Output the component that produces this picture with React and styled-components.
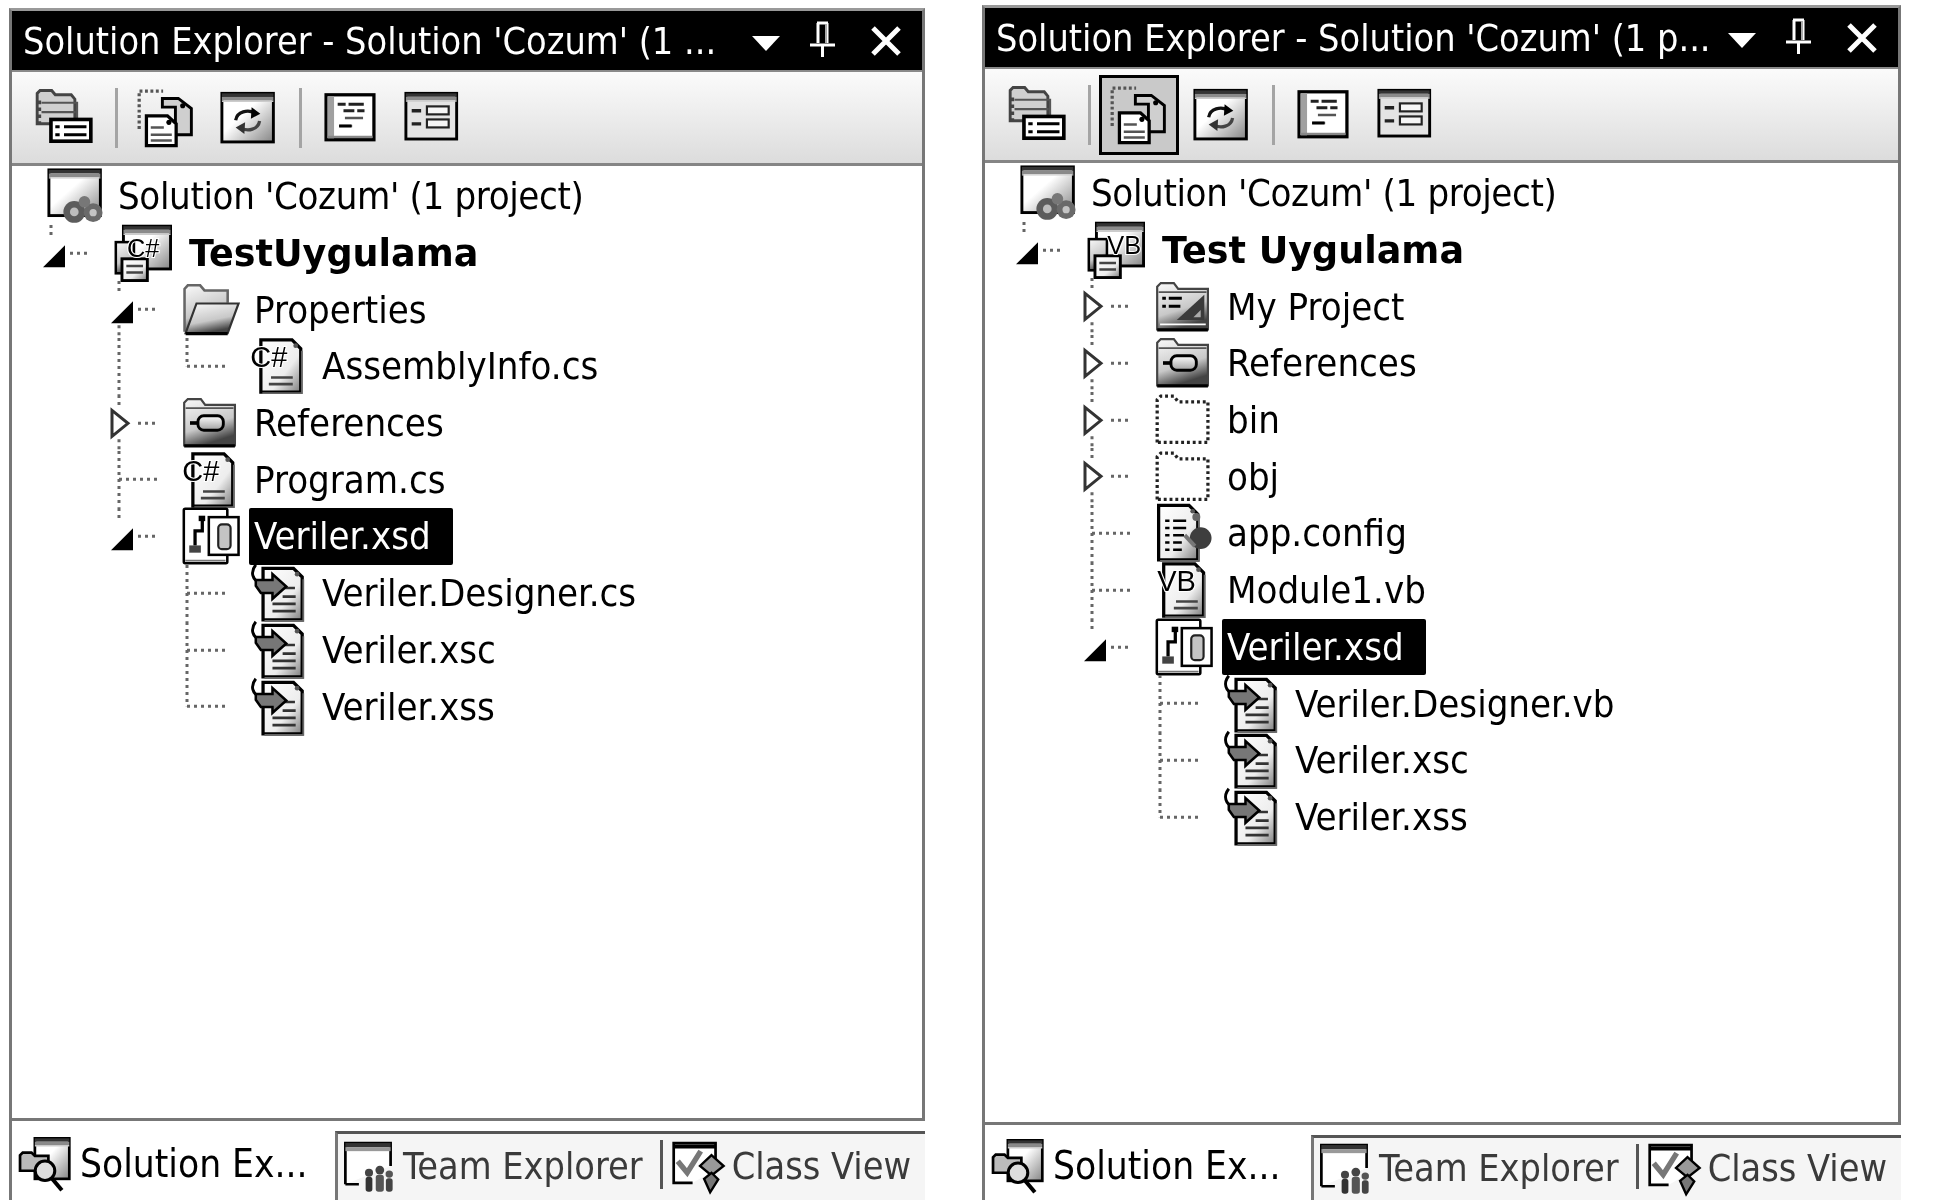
import { createGlobalStyle } from "styled-components";
import styled from "styled-components";

const GlobalStyle = createGlobalStyle`
  html, body {
    margin: 0;
    padding: 0;
    background: #ffffff;
  }
`;

const ROW_HEIGHT = 56.7;
const FONT = `"DejaVu Sans Condensed", "Liberation Sans", sans-serif`;

/* ---------- shared svg bits ---------- */

const Shades = () => (
  <defs>
    <linearGradient id="page" x1="0" y1="0" x2="1" y2="1">
      <stop offset="0" stopColor="#ffffff" />
      <stop offset="0.62" stopColor="#ededed" />
      <stop offset="1" stopColor="#7c7c7c" />
    </linearGradient>
    <linearGradient id="dark" x1="0" y1="0" x2="0.35" y2="1">
      <stop offset="0" stopColor="#fafafa" />
      <stop offset="0.65" stopColor="#c8c8c8" />
      <stop offset="1" stopColor="#444444" />
    </linearGradient>
    <linearGradient id="win" x1="0" y1="0" x2="1" y2="1">
      <stop offset="0.42" stopColor="#ffffff" />
      <stop offset="1" stopColor="#858585" />
    </linearGradient>
    <linearGradient id="pill" x1="0" y1="0" x2="0" y2="1">
      <stop offset="0" stopColor="#ffffff" />
      <stop offset="1" stopColor="#a0a0a0" />
    </linearGradient>
  </defs>
);

const IconSvg = styled.svg`
  display: block;
  flex: none;
  width: ${(p) => p.$size || 58}px;
  height: ${(p) => p.$size || 58}px;
  overflow: visible;
`;

const Glyph = ({ size, children }) => (
  <IconSvg $size={size} viewBox="0 0 16 16">
    <Shades />
    {children}
  </IconSvg>
);

const ln = { fill: "none", stroke: "#000", strokeWidth: 0.8 };
const tiny = {
  fontFamily: "'Liberation Sans', sans-serif",
  fontWeight: 400,
  stroke: "#fff",
  strokeWidth: 0.6,
  paintOrder: "stroke",
};

const Page = ({ x = 4, y = 0.8, w = 10, h = 14.4 }) => (
  <>
    <path
      d={`M${x} ${y}H${x + w - 2.4}L${x + w} ${y + 2.4}V${y + h}H${x}Z`}
      fill="url(#page)"
      stroke="#000"
      strokeWidth="0.9"
    />
    <path d={`M${x + 0.4} ${y + h + 0.3}H${x + w + 0.3}V${y + 3}`} fill="none" stroke="#666" strokeWidth="0.5" />
    <circle cx={x + w - 1.4} cy={y + 1.6} r="0.65" fill="#555" />
  </>
);

const WindowBox = ({ x = 1, y = 1, w = 14, h = 13, bar = 2.2, fill = "url(#win)" }) => (
  <>
    <rect x={x} y={y} width={w} height={h} fill={fill} stroke="#000" strokeWidth="0.8" />
    <rect x={x} y={y} width={w} height={bar * 0.5} fill="#333" />
    <rect x={x} y={y + bar * 0.5} width={w} height={bar * 0.5} fill="#8a8a8a" />
    <path d={`M${x} ${y + bar + 0.2}H${x + w}`} stroke="#ccc" strokeWidth="0.4" />
  </>
);

/* ---------- tree icons ---------- */

const SolutionIcon = () => (
  <Glyph>
    <WindowBox x={0.8} y={0.8} w={14.2} h={12.6} bar={2} />
    <circle cx="7.8" cy="12.4" r="3" fill="#5c5c5c" />
    <circle cx="7.8" cy="12.4" r="1.2" fill="#bdbdbd" />
    <circle cx="13" cy="12.6" r="2.6" fill="#6a6a6a" />
    <circle cx="13" cy="12.6" r="1" fill="#c4c4c4" />
    <circle cx="10.6" cy="9.6" r="1.6" fill="#777" />
  </Glyph>
);

const ProjectIcon = ({ kind }) => (
  <Glyph>
    <WindowBox x={2.6} y={0.6} w={13} h={11.8} bar={2} />
    <rect x="0.5" y="5" width="5" height="8.6" fill="url(#dark)" stroke="#000" strokeWidth="0.7" />
    <rect x="2.2" y="9.6" width="7" height="6" fill="url(#page)" stroke="#000" strokeWidth="0.8" />
    <path d="M3.4 11.6H8M3.4 13.4H8" stroke="#444" strokeWidth="0.7" />
    <text x={kind === "VB" ? 5.6 : 3.6} y="9.2" fontSize="7" {...tiny}>
      {kind}
    </text>
  </Glyph>
);

const OpenFolderIcon = () => (
  <Glyph>
    <path d="M0.7 14V2.2L1.6 1.2H5L6.2 2.6H12.6V6" fill="url(#dark)" stroke="#666" strokeWidth="0.7" />
    <path d="M1 14.4L4 6.2H15.6L12.6 14.4Z" fill="url(#dark)" stroke="#333" strokeWidth="0.6" />
    <path d="M1 14.5H12.6" stroke="#000" strokeWidth="0.9" />
  </Glyph>
);

const FolderBase = ({ children }) => (
  <>
    <path d="M0.6 14.2V2.4L1.6 1.4H5.2L6.4 3H14.6V14.2Z" fill="url(#dark)" stroke="#444" strokeWidth="0.6" />
    <path d="M1 3.9H14.2" stroke="#555" strokeWidth="0.5" />
    <path d="M0.6 14.3H14.6" stroke="#000" strokeWidth="0.9" />
    {children}
  </>
);

const ReferencesIcon = () => (
  <Glyph>
    <FolderBase>
      <rect x="4.4" y="6" width="7" height="4" rx="1.6" fill="url(#pill)" stroke="#000" strokeWidth="0.8" />
      <path d="M2.2 8H4.4" stroke="#000" strokeWidth="1" />
    </FolderBase>
  </Glyph>
);

const MyProjectIcon = () => (
  <Glyph>
    <FolderBase>
      <path d="M2 5.6H3M3.8 5.6H7.4M2 7.8H3M3.8 7.8H7" stroke="#000" strokeWidth="0.8" />
      <path d="M6 11.6L13.6 4.6V11.6Z" fill="#3a3a3a" />
      <path d="M10.6 10.8L12.6 8.8V10.8Z" fill="#aaa" />
      <path d="M1.4 12.8H14" stroke="#fff" strokeWidth="0.5" />
    </FolderBase>
  </Glyph>
);

const DashedFolderIcon = () => (
  <Glyph>
    <path
      d="M0.6 14.2V2.4L1.6 1.4H5.2L6.4 3H14.6V14.2Z"
      fill="none"
      stroke="#222"
      strokeWidth="0.9"
      strokeDasharray="0.8 0.8"
    />
  </Glyph>
);

const ConfigIcon = () => (
  <Glyph>
    <Page x={1} y={0.4} w={10.8} h={15} />
    <path d="M2.8 4.6H4M5 4.6H8.6M2.8 6.6H4M5 6.6H8.6M2.8 8.6H4M5 8.6H8M2.8 10.6H4M5 10.6H7.4M2.8 12.6H4M5 12.6H7.4" stroke="#000" strokeWidth="0.7" />
    <circle cx="12.6" cy="9.4" r="3" fill="#3e3e3e" />
    <circle cx="11.4" cy="3.6" r="1.1" fill="#666" />
    <path d="M8.2 8.6l2.8 3" stroke="#777" strokeWidth="1.1" />
  </Glyph>
);

const CodeDocIcon = ({ kind }) => (
  <Glyph>
    <Page x={kind === "VB" ? 2.4 : 3} y={0.8} w={11} h={14.4} />
    <path d="M5.8 11.2H11.8M5.2 13H11.8" stroke="#444" strokeWidth="0.7" />
    <text x={kind === "VB" ? 0.6 : 0.1} y="8.2" fontSize="8" {...tiny}>
      {kind}
    </text>
  </Glyph>
);

const SchemaIcon = () => (
  <Glyph>
    <rect x="0.5" y="0.5" width="12" height="15" rx="0.4" fill="#fff" stroke="#000" strokeWidth="0.7" />
    <rect x="7.4" y="2.8" width="8.2" height="10.4" fill="#fff" stroke="#000" strokeWidth="0.7" />
    <rect x="10" y="4.8" width="3.4" height="6.8" rx="1" fill="#c4c4c4" stroke="#222" strokeWidth="0.6" />
    <path d="M5.6 3.4V6.6H3.6V10.6" stroke="#000" strokeWidth="0.9" fill="none" />
    <rect x="4.6" y="2.4" width="1.8" height="1.5" fill="#000" />
    <rect x="2" y="10.6" width="3.2" height="2" fill="#444" />
    <path d="M0.9 14.8H12" stroke="#777" strokeWidth="0.5" />
  </Glyph>
);

const GeneratedDocIcon = () => (
  <Glyph>
    <Page x={3.6} y={1.2} w={10.8} h={14.2} />
    <path d="M9.2 6.6H12.4M9 9H12.6M6.2 11H12.6M6.2 13H12.6" stroke="#333" strokeWidth="0.7" />
    <path d="M1.6 0.2C0 2.2 0.6 4.6 3 5.2" {...ln} />
    <path d="M1.6 4.4H6.2V2.8L10 6.2L6.2 9.6V8H3L1.6 6Z" fill="#777" stroke="#000" strokeWidth="0.7" />
  </Glyph>
);

/* ---------- toolbar icons ---------- */

const ShowPropsIcon = () => (
  <Glyph>
    <path d="M0.6 9.6V1.2L1.4 0.4H4.6L5.6 1.6H10L11 2.8V9.6Z" fill="#d0d0d0" stroke="#444" strokeWidth="0.8" />
    <path d="M1.8 3.8H11.6V9M1.8 6.4H11.2" stroke="#555" strokeWidth="0.6" fill="none" />
    <path d="M1.2 3.2V10" stroke="#444" strokeWidth="1" strokeDasharray="1 0.9" />
    <rect x="4.4" y="8.4" width="11" height="6" fill="#fff" stroke="#000" strokeWidth="1" />
    <path d="M5.6 10.4H6.8M8 10.4H14.2M5.6 12.6H6.8M8 12.6H14.2" stroke="#000" strokeWidth="0.8" />
  </Glyph>
);

const CopyDocsIcon = () => (
  <Glyph>
    <path d="M0.6 11V0.6H7.2" fill="none" stroke="#555" strokeWidth="0.9" strokeDasharray="0.8 0.7" />
    <path d="M7 5V2.6H11.4L15 5.4V12.6H10.6V5Z" fill="#cfcfcf" stroke="#000" strokeWidth="0.8" />
    <circle cx="12.6" cy="4.6" r="0.7" fill="#000" />
    <path d="M2.6 7.4H8.4L10.8 9.6V15.6H2.6Z" fill="#fff" stroke="#000" strokeWidth="0.9" />
    <circle cx="8.8" cy="9.2" r="0.7" fill="#000" />
    <path d="M3.8 10.6H7.4M3.8 12.6H9.6M3.8 14.2H9.6" stroke="#555" strokeWidth="0.7" />
  </Glyph>
);

const RefreshIcon = () => (
  <Glyph>
    <WindowBox x={0.8} y={1.2} w={14.2} h={13.4} bar={2} />
    <path d="M4.6 8.6C5 6.2 8 5.6 9.8 6.6" fill="none" stroke="#111" strokeWidth="0.9" />
    <path d="M9 5L11.4 6.8L8.8 8.2Z" fill="#000" />
    <path d="M11.2 8.8C10.8 11.2 8 11.8 6.2 10.8" fill="none" stroke="#444" strokeWidth="0.9" />
    <path d="M7 12.4L4.6 10.6L7.2 9.2Z" fill="#333" />
  </Glyph>
);

const ViewCodeIcon = () => (
  <Glyph>
    <rect x="1.4" y="1.6" width="13.2" height="12.4" fill="#fff" stroke="#000" strokeWidth="0.9" />
    <rect x="1.8" y="2" width="1.8" height="11.6" fill="#a0a0a0" />
    <path d="M1.8 13.2H14.2" stroke="#888" strokeWidth="0.6" />
    <path d="M4.6 4.2H6.8M7.6 4.2H11.8M6.2 6H9.2M10 6H12" stroke="#222" strokeWidth="0.8" />
    <path d="M6.6 8H11.6M5 10.2H8.6" stroke="#555" strokeWidth="0.7" />
    <path d="M5 10.2H8.4" stroke="#000" strokeWidth="0.8" />
  </Glyph>
);

const ViewDesignIcon = () => (
  <Glyph>
    <WindowBox x={0.8} y={1.2} w={14} h={12.6} bar={1.9} fill="#e4e4e4" />
    <path d="M2.4 6H5M2.4 9.6H5" stroke="#222" strokeWidth="0.9" />
    <rect x="6.6" y="4.8" width="6" height="2.2" fill="#f6f6f6" stroke="#222" strokeWidth="0.6" />
    <rect x="6.6" y="8.4" width="6" height="2.2" fill="#f6f6f6" stroke="#222" strokeWidth="0.6" />
  </Glyph>
);

/* ---------- tab icons ---------- */

const SolutionExplorerIcon = () => (
  <Glyph size={54}>
    <WindowBox x={5} y={0.4} w={10.2} h={12} bar={2} />
    <path d="M0.6 10V5.4L1.4 4.6H4L5 5.6H9V10Z" fill="#bbb" stroke="#000" strokeWidth="0.8" />
    <circle cx="8" cy="10" r="2.9" fill="#ddd" stroke="#000" strokeWidth="0.9" />
    <path d="M10 12.2L13 15.8" stroke="#000" strokeWidth="1.2" />
  </Glyph>
);

const TeamExplorerIcon = () => (
  <Glyph size={54}>
    <path d="M1 13.4V1.2H14.4V8M1 13.4H5" fill="#fff" stroke="#000" strokeWidth="0.8" />
    <rect x="1" y="1.2" width="13.4" height="1.2" fill="#333" />
    <rect x="1" y="2.4" width="13.4" height="1.2" fill="#999" />
    <circle cx="8" cy="10" r="1.2" fill="#444" />
    <rect x="7" y="11.2" width="2" height="4.4" rx="0.8" fill="#333" />
    <circle cx="11.2" cy="9.2" r="1.3" fill="#444" />
    <rect x="10" y="10.6" width="2.4" height="5" rx="0.8" fill="#555" />
    <circle cx="14" cy="10.4" r="1.1" fill="#555" />
    <rect x="13" y="11.6" width="2" height="4" rx="0.8" fill="#444" />
  </Glyph>
);

const ClassViewIcon = () => (
  <Glyph size={54}>
    <path d="M13.2 9V1.2H0.8V13H6.4" fill="#fff" stroke="#000" strokeWidth="0.8" />
    <path d="M0.8 2.2H13.2" stroke="#000" strokeWidth="1.2" />
    <path d="M2 6.6L4.8 10L8.8 3.6" fill="none" stroke="#777" strokeWidth="1.6" />
    <path d="M12 4.8L15.6 8L12 10.8L8.6 8Z" fill="#999" stroke="#000" strokeWidth="0.7" />
    <path d="M9.8 11.8L12 10L14 12L11.6 15.8Z" fill="#777" stroke="#000" strokeWidth="0.7" />
  </Glyph>
);

/* ---------- title bar buttons ---------- */

const DropArrow = () => (
  <svg width="28" height="15" viewBox="0 0 28 15">
    <path d="M0 0H28L14 15Z" fill="#fff" />
  </svg>
);

const PinIcon = () => (
  <svg width="27" height="36" viewBox="0 0 27 36">
    <path d="M8 2H19M9 2V22M18 2V22M1 24H26M13.5 24V36" stroke="#fff" strokeWidth="3" fill="none" />
    <path d="M17 3V22" stroke="#aaa" strokeWidth="2" />
  </svg>
);

const CloseIcon = () => (
  <svg width="32" height="30" viewBox="0 0 32 30">
    <path d="M3 2L29 28M29 2L3 28" stroke="#fff" strokeWidth="5" />
  </svg>
);

/* ---------- tree ---------- */

const guideX = (level) => 39 + 68 * level;

const GuideSvg = styled.svg`
  display: block;
  flex: none;
  height: 100%;
`;

const Dots = (props) => (
  <path fill="none" stroke="#666" strokeWidth="3" strokeDasharray="3 4" {...props} />
);

const Guides = ({ depth, expander, hasNext, through = [] }) => {
  const width = 34 + 68 * depth;
  const h = ROW_HEIGHT;
  const c = h / 2;
  const p = guideX(depth - 1);
  return (
    <GuideSvg width={width} height={h}>
      {through.map((lvl) => (
        <Dots key={lvl} d={`M${guideX(lvl)} 0V${h}`} />
      ))}
      {depth > 0 && !expander && (
        <>
          <Dots d={`M${p} 0V${hasNext ? h : c}`} />
          <Dots d={`M${p} ${c}H${p + 39}`} />
        </>
      )}
      {depth > 0 && expander && (
        <>
          <Dots d={`M${p} 0V${c - 15}`} />
          {hasNext && <Dots d={`M${p} ${c + 16}V${h}`} />}
          <Dots d={`M${p + 19} ${c}H${p + 39}`} />
        </>
      )}
      {expander === "open" && <path d={`M${p + 14} ${c - 8}V${c + 14}H${p - 8}Z`} fill="#000" />}
      {expander === "closed" && (
        <path
          d={`M${p - 7} ${c - 13}L${p + 9} ${c}L${p - 7} ${c + 13}Z`}
          fill="#fff"
          stroke="#333"
          strokeWidth="3"
        />
      )}
    </GuideSvg>
  );
};

const TreeList = styled.div`
  flex: 1;
  padding-top: 2px;
  background: #ffffff;
`;

const Row = styled.div`
  display: flex;
  align-items: center;
  height: ${ROW_HEIGHT}px;
`;

const Label = styled.div`
  display: flex;
  align-items: center;
  height: 100%;
  margin-left: 9px;
  padding: 0 ${(p) => (p.$selected ? 22 : 20)}px 0 ${(p) => (p.$bold ? 8 : 5)}px;
  font-family: ${(p) => (p.$bold ? `"DejaVu Sans", "Liberation Sans", sans-serif` : "inherit")};
  font-size: ${(p) => (p.$bold ? 36.5 : 38)}px;
  font-weight: ${(p) => (p.$bold ? 700 : 400)};
  letter-spacing: ${(p) => (p.$tight ? "-0.35px" : "normal")};
  white-space: nowrap;
  color: ${(p) => (p.$selected ? "#ffffff" : "#000000")};
  background: ${(p) => (p.$selected ? "#000000" : "transparent")};
  border-radius: 2px;
`;

const TreeRow = ({ row }) => (
  <Row>
    <Guides depth={row.depth} expander={row.expander} hasNext={row.hasNext} through={row.through} />
    {row.icon}
    <Label $bold={row.bold} $selected={row.selected} $tight={row.tight}>
      {row.label}
    </Label>
  </Row>
);

/* ---------- panel ---------- */

const Desk = styled.div`
  display: flex;
  gap: 57px;
  width: 1953px;
  height: 1200px;
  padding-left: 9px;
  box-sizing: border-box;
  overflow: hidden;
  background: #ffffff;
  font-family: ${FONT};
  filter: blur(0.7px);
`;

const Panel = styled.section`
  display: flex;
  flex-direction: column;
  flex: none;
  width: ${(p) => p.$width}px;
  height: ${(p) => 1200 - p.$top}px;
  margin-top: ${(p) => p.$top}px;
`;

const Frame = styled.div`
  display: flex;
  flex-direction: column;
  flex: none;
  height: ${(p) => p.$height}px;
  box-sizing: border-box;
  border: 3px solid #777777;
  border-top-color: #999999;
`;

const TitleBar = styled.header`
  display: flex;
  align-items: center;
  flex: none;
  height: 59px;
  padding: 0 20px 0 11px;
  background: #000000;
  color: #ffffff;
`;

const TitleText = styled.div`
  flex: 1;
  font-size: 37.5px;
  white-space: nowrap;
`;

const TitleButtons = styled.div`
  display: flex;
  align-items: center;
`;

const ArrowSlot = styled.div`
  display: flex;
  margin: 6px 29px 0 0;
`;

const PinSlot = styled.div`
  display: flex;
  margin: -4px 34px 0 0;
`;

const Toolbar = styled.div`
  display: flex;
  align-items: center;
  gap: 2px;
  flex: none;
  height: 91px;
  padding-left: 12px;
  border-top: 2px solid #8a8a8a;
  border-bottom: 3px solid #858585;
  background: linear-gradient(#fbfbfb, #efefef 40%, #dcdcdc 100%);
`;

const Tool = styled.button`
  display: flex;
  align-items: center;
  justify-content: center;
  box-sizing: border-box;
  width: 80px;
  height: 80px;
  padding: 0;
  background: ${(p) => (p.$active ? "#c9c9c9" : "transparent")};
  border: 3px solid ${(p) => (p.$active ? "#000000" : "transparent")};
`;

const ToolSep = styled.div`
  width: 3px;
  height: 60px;
  margin: 0 6px 0 9px;
  background: #a4a4a4;
`;

const TabStrip = styled.div`
  display: flex;
  flex: 1;
  border-left: 3px solid #777777;
`;

const ActiveTab = styled.div`
  display: flex;
  align-items: center;
  flex: none;
  box-sizing: border-box;
  width: ${(p) => p.$width}px;
  padding: 6px 0 0 6px;
  gap: 8px;
  font-size: 38.5px;
  white-space: nowrap;
  color: #000000;
`;

const IdleTabs = styled.div`
  display: flex;
  align-items: center;
  flex: 1;
  margin-top: 10px;
  padding: 0 0 3px 4px;
  border-top: 3px solid #555555;
  border-left: 3px solid #777777;
  background: #f5f5f5;
`;

const IdleTab = styled.div`
  display: flex;
  align-items: center;
  gap: 7px;
  font-size: 37.5px;
  white-space: nowrap;
  color: #3a3a3a;
`;

const TabSep = styled.div`
  align-self: stretch;
  width: 3px;
  margin: 6px 8px 8px 17px;
  background: #555555;
`;

const ExplorerPanel = ({ top, width, frameHeight, title, activeTabWidth, activeTool, rows }) => (
  <Panel $top={top} $width={width}>
    <Frame $height={frameHeight}>
      <TitleBar>
        <TitleText>{title}</TitleText>
        <TitleButtons>
          <ArrowSlot>
            <DropArrow />
          </ArrowSlot>
          <PinSlot>
            <PinIcon />
          </PinSlot>
          <CloseIcon />
        </TitleButtons>
      </TitleBar>
      <Toolbar>
        <Tool>
          <ShowPropsIcon />
        </Tool>
        <ToolSep />
        <Tool $active={activeTool}>
          <CopyDocsIcon />
        </Tool>
        <Tool>
          <RefreshIcon />
        </Tool>
        <ToolSep />
        <Tool>
          <ViewCodeIcon />
        </Tool>
        <Tool>
          <ViewDesignIcon />
        </Tool>
      </Toolbar>
      <TreeList>
        {rows.map((row) => (
          <TreeRow key={row.label} row={row} />
        ))}
      </TreeList>
    </Frame>
    <TabStrip>
      <ActiveTab $width={activeTabWidth}>
        <SolutionExplorerIcon />
        Solution Ex...
      </ActiveTab>
      <IdleTabs>
        <IdleTab>
          <TeamExplorerIcon />
          Team Explorer
        </IdleTab>
        <TabSep />
        <IdleTab>
          <ClassViewIcon />
          Class View
        </IdleTab>
      </IdleTabs>
    </TabStrip>
  </Panel>
);

const schemaRows = (designer) => [
  { depth: 2, expander: "open", icon: <SchemaIcon />, label: "Veriler.xsd", selected: true },
  { depth: 3, hasNext: true, icon: <GeneratedDocIcon />, label: designer },
  { depth: 3, hasNext: true, icon: <GeneratedDocIcon />, label: "Veriler.xsc" },
  { depth: 3, icon: <GeneratedDocIcon />, label: "Veriler.xss" },
];

const csharpRows = [
  { depth: 0, icon: <SolutionIcon />, label: "Solution 'Cozum' (1 project)", tight: true },
  { depth: 1, expander: "open", icon: <ProjectIcon kind="C#" />, label: "TestUygulama", bold: true },
  { depth: 2, expander: "open", hasNext: true, icon: <OpenFolderIcon />, label: "Properties" },
  { depth: 3, through: [1], icon: <CodeDocIcon kind="C#" />, label: "AssemblyInfo.cs" },
  { depth: 2, expander: "closed", hasNext: true, icon: <ReferencesIcon />, label: "References" },
  { depth: 2, hasNext: true, icon: <CodeDocIcon kind="C#" />, label: "Program.cs" },
  ...schemaRows("Veriler.Designer.cs"),
];

const vbRows = [
  { depth: 0, icon: <SolutionIcon />, label: "Solution 'Cozum' (1 project)", tight: true },
  { depth: 1, expander: "open", icon: <ProjectIcon kind="VB" />, label: "Test Uygulama", bold: true },
  { depth: 2, expander: "closed", hasNext: true, icon: <MyProjectIcon />, label: "My Project" },
  { depth: 2, expander: "closed", hasNext: true, icon: <ReferencesIcon />, label: "References" },
  { depth: 2, expander: "closed", hasNext: true, icon: <DashedFolderIcon />, label: "bin" },
  { depth: 2, expander: "closed", hasNext: true, icon: <DashedFolderIcon />, label: "obj" },
  { depth: 2, hasNext: true, icon: <ConfigIcon />, label: "app.config" },
  { depth: 2, hasNext: true, icon: <CodeDocIcon kind="VB" />, label: "Module1.vb" },
  ...schemaRows("Veriler.Designer.vb"),
];

export default function App() {
  return (
    <>
      <GlobalStyle />
      <Desk>
        <ExplorerPanel
          top={8}
          width={916}
          frameHeight={1113}
          title="Solution Explorer - Solution 'Cozum' (1 ..."
          activeTabWidth={323}
          rows={csharpRows}
        />
        <ExplorerPanel
          top={5}
          width={919}
          frameHeight={1120}
          title="Solution Explorer - Solution 'Cozum' (1 p..."
          activeTabWidth={326}
          activeTool
          rows={vbRows}
        />
      </Desk>
    </>
  );
}
